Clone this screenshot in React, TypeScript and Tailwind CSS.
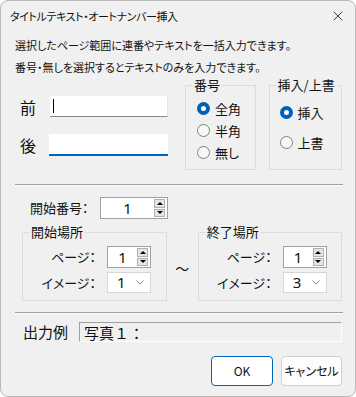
import { X } from 'lucide-react';

const jp = "font-['Noto_Sans_CJK_JP',sans-serif] [font-feature-settings:'palt']";

const Radio = ({ checked, label }: { checked?: boolean; label: string }) => (
  <div className="flex items-center h-[22px] gap-[5px]">
    {checked ? (
      <span className="w-[13px] h-[13px] rounded-full bg-[#005fb8] flex items-center justify-center">
        <span className="w-[5px] h-[5px] rounded-full bg-white" />
      </span>
    ) : (
      <span className="w-[13px] h-[13px] rounded-full border border-[#808080] bg-[#f7f7f7]" />
    )}
    <span className="text-[13px] leading-none">{label}</span>
  </div>
);

const Spin = ({ value, className = '' }: { value: string; className?: string }) => (
  <div className={`flex h-[22px] border border-[#a0a0a0] bg-white ${className}`}>
    <div className="flex-1 flex items-center justify-center text-[15px] font-['Noto_Sans',sans-serif] leading-none">{value}</div>
    <div className="flex flex-col w-[11px] my-[1px] mr-[2px] gap-[1px]">
      <div className="flex-1 bg-[#e5e5e5] border border-[#b0b0b0] flex items-center justify-center">
        <span className="w-0 h-0 border-x-[3px] border-x-transparent border-b-[3px] border-b-black" />
      </div>
      <div className="flex-1 bg-[#e5e5e5] border border-[#b0b0b0] flex items-center justify-center">
        <span className="w-0 h-0 border-x-[3px] border-x-transparent border-t-[3px] border-t-black" />
      </div>
    </div>
  </div>
);

const Combo = ({ value }: { value: string }) => (
  <div className="flex items-center h-[21px] w-[44px] border border-[#d6d6d6] bg-white pl-[9px] pr-[6px]">
    <span className="flex-1 text-[15px] font-['Noto_Sans',sans-serif] leading-none">{value}</span>
    <svg width="8" height="5" viewBox="0 0 8 5" fill="none" stroke="#8a8a8a" strokeWidth="1">
      <path d="M0.5 0.5 L4 4 L7.5 0.5" />
    </svg>
  </div>
);

const Place = ({ title, image, width }: { title: string; image: string; width: string }) => (
  <fieldset className={`border border-[#dcdcdc] h-[76px] ${width}`}>
    <legend className="ml-[6px] px-[2px] text-[13px] leading-[14px]">{title}</legend>
    <div className="flex flex-col gap-[4px] pt-[7px]">
      <div className="flex items-center">
        <span className="w-[74px] text-right text-[13px] pr-[1px]">ページ：</span>
        <Spin value="1" className="ml-[10px] w-[44px] h-[21px]" />
      </div>
      <div className="flex items-center">
        <span className="w-[74px] text-right text-[13px] pr-[1px]">イメージ：</span>
        <div className="ml-[10px]">
          <Combo value={image} />
        </div>
      </div>
    </div>
  </fieldset>
);

const Rule = () => (
  <div className="mr-[-1px]">
    <div className="h-px bg-[#a0a0a0]" />
    <div className="h-px bg-white" />
  </div>
);

export default function App() {
  return (
    <div className={`w-[356px] h-[397px] bg-[#f0f0f0] border border-[#b9b9b9] rounded-lg flex flex-col text-[#111] ${jp}`}>
      <div className="h-[30px] flex items-center justify-between pl-[9px] pr-[9px]">
        <span className="text-[11px] tracking-[-0.4px]">タイトルテキスト・オートナンバー挿入</span>
        <X size={16} strokeWidth={1.2} />
      </div>

      <div className="flex flex-col pl-[14px] pr-[13px]">
        <div className="pt-[3px] text-[11px] leading-[22px]">
          <p>選択したページ範囲に連番やテキストを一括入力できます。</p>
          <p>番号・無しを選択するとテキストのみを入力できます。</p>
        </div>

        <div className="flex h-[92px]">
          <div className="flex flex-col pt-[18px] w-[153px] gap-[17px]">
            <div className="flex items-center">
              <span className="w-[35px] pl-[5px] text-[16px] leading-none">前</span>
              <div className="w-[118px] h-[21px] bg-white border-b border-[#8a8a8a] border-r border-r-[#e6e6e6] flex items-center pl-[3px]">
                <span className="w-px h-[14px] bg-black" />
              </div>
            </div>
            <div className="flex items-center">
              <span className="w-[34px] pl-[5px] text-[16px] leading-none">後</span>
              <div className="w-[119px] h-[22px] bg-white border-b-2 border-[#0067c0]" />
            </div>
          </div>

          <fieldset className="ml-[17px] w-[72px] h-[92px] border border-[#dcdcdc]">
            <legend className="ml-[6px] px-[2px] text-[13px] leading-[14px]">番号</legend>
            <div className="flex flex-col pt-[5px] pl-[11px]">
              <Radio checked label="全角" />
              <Radio label="半角" />
              <Radio label="無し" />
            </div>
          </fieldset>

          <fieldset className="ml-[13px] w-[75px] h-[92px] border border-[#dcdcdc]">
            <legend className="ml-[6px] px-[2px] text-[13px] leading-[14px]">挿入/上書</legend>
            <div className="flex flex-col pt-[9px] pl-[10px] gap-[8px]">
              <Radio checked label="挿入" />
              <Radio label="上書" />
            </div>
          </fieldset>
        </div>

        <div className="mt-[14px]">
          <Rule />
        </div>

        <div className="flex items-center mt-[11px]">
          <span className="w-[85px] pl-[15px] text-[13px]">開始番号：</span>
          <Spin value="1" className="w-[68px]" />
        </div>

        <div className="flex items-center mt-[6px]">
          <div className="ml-[7px]">
            <Place title="開始場所" image="1" width="w-[145px]" />
          </div>
          <span className="w-[31px] text-center text-[14px] pt-[10px]">～</span>
          <Place title="終了場所" image="3" width="w-[146px]" />
        </div>

        <div className="mt-[11px]">
          <Rule />
        </div>

        <div className="flex items-center mt-[7px]">
          <span className="w-[64px] pl-[8px] text-[15px] [font-feature-settings:normal]">出力例</span>
          <div className="flex-1 h-[20px] border border-[#a0a0a0] border-r-white border-b-white flex items-center pl-[4px] text-[15px] leading-none [font-feature-settings:normal]">
            写真１：
          </div>
        </div>

        <div className="flex justify-end gap-[8px] mt-[12px]">
          <button className="w-[62px] h-[30px] rounded-[4px] bg-white border border-[#0067c0] text-[12px]">OK</button>
          <button className="w-[61px] h-[30px] rounded-[4px] bg-[#fdfdfd] border border-[#d0d0d0] text-[12px]">キャンセル</button>
        </div>
      </div>
    </div>
  );
}
